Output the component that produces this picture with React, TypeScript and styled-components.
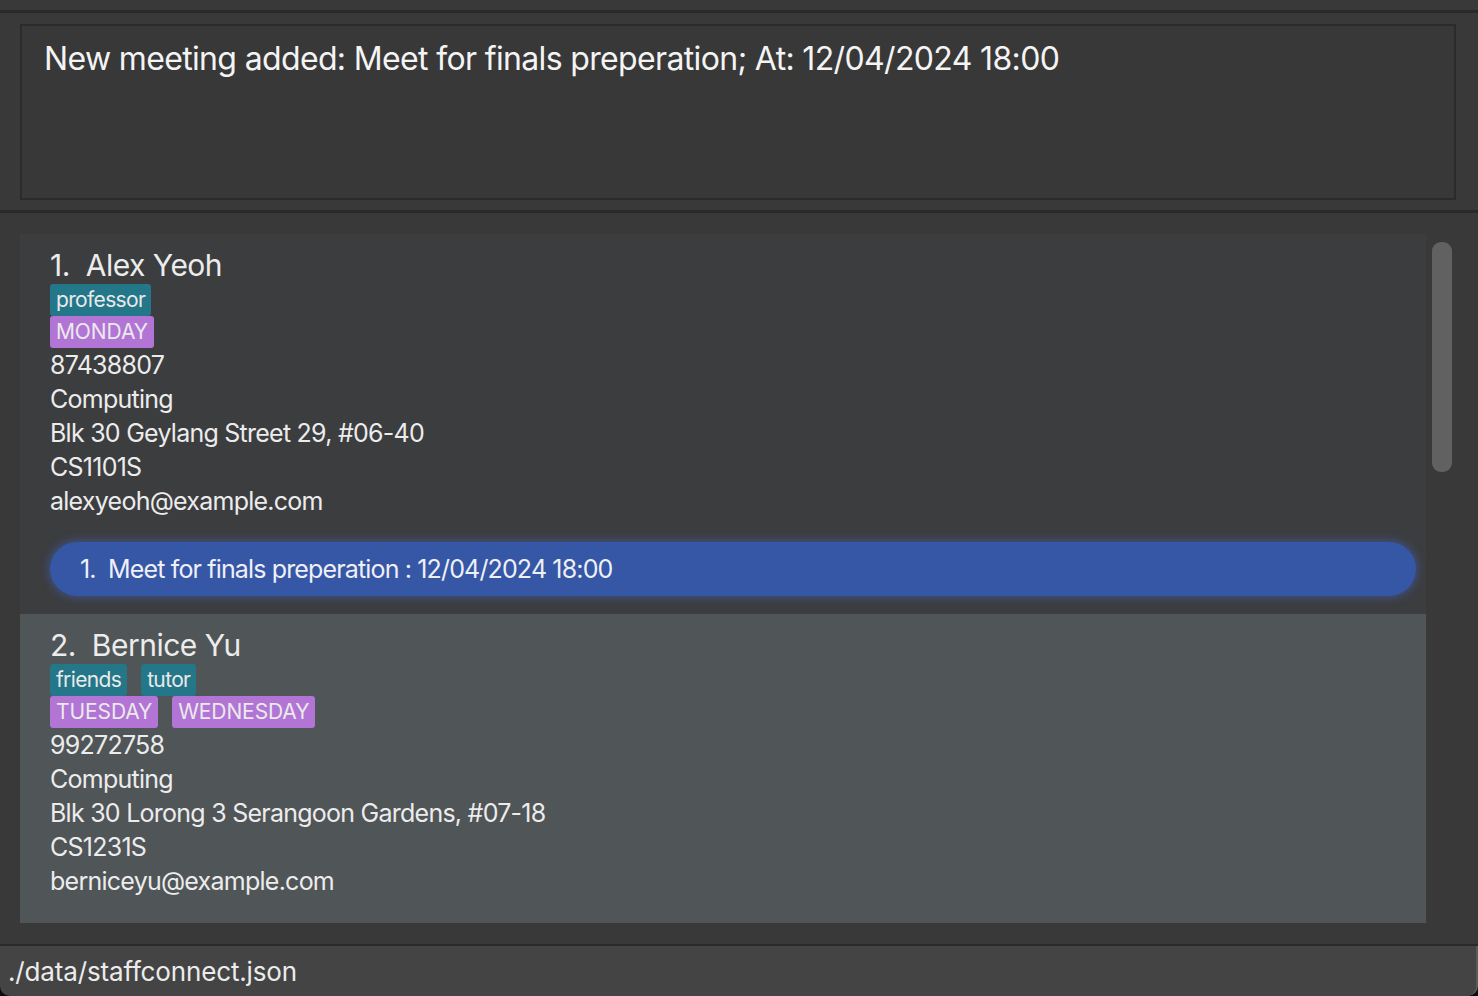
import React from "react";
import styled, { createGlobalStyle } from "styled-components";

const Global = createGlobalStyle`
  html, body { margin: 0; padding: 0; background: #0c0c0c; }
  body { font-family: Inter, "Noto Sans", sans-serif; }
  * { box-sizing: border-box; }
`;

const Window = styled.div`
  width: 1478px;
  height: 996px;
  display: flex;
  flex-direction: column;
  background: #393939;
  border-radius: 0 0 10px 10px;
  overflow: hidden;
`;

const TopStrip = styled.div`
  height: 10px;
  flex: none;
`;

const Divider = styled.div<{ $h: number }>`
  height: ${(p) => p.$h}px;
  flex: none;
  background: #2a2a2a;
`;

const ResultPane = styled.div`
  height: 197px;
  flex: none;
  padding: 11px 22px 10px 20px;
  background: #393939;
`;

const ResultBox = styled.div`
  height: 100%;
  border: 2px solid #2b2b2b;
  background: #383838;
  padding: 13px 22px;
  color: #f4f4f4;
  font-size: 32px;
  letter-spacing: -0.65px;
  line-height: 40px;
`;

const ListPane = styled.div`
  flex: 1;
  display: flex;
  padding: 21px 0 0 20px;
  background: #393939;
  min-height: 0;
`;

const List = styled.div`
  width: 1406px;
  display: flex;
  flex-direction: column;
`;

const ScrollTrack = styled.div`
  width: 52px;
  padding: 8px 0 0 6px;
`;

const ScrollThumb = styled.div`
  width: 20px;
  height: 230px;
  border-radius: 9px;
  background: #616161;
`;

const Card = styled.div<{ $alt: boolean; $hasMeetings: boolean }>`
  background: ${(p) => (p.$alt ? "#505557" : "#3c3d3f")};
  padding: 12px 10px ${(p) => (p.$hasMeetings ? 18 : 25)}px 30px;
  color: #ececec;
`;

const Name = styled.div`
  font-size: 30px;
  line-height: 38px;
  height: 38px;
  letter-spacing: -0.5px;
  white-space: pre;
`;

const TagRow = styled.div`
  display: flex;
  gap: 14px;
`;

const Tag = styled.span<{ $kind: "tag" | "day" }>`
  display: inline-block;
  height: 32px;
  line-height: 32px;
  padding: 0 6px;
  border-radius: 3px;
  font-size: 21px;
  letter-spacing: ${(p) => (p.$kind === "tag" ? "-0.65px" : "-0.1px")};
  color: #eaeaea;
  background: ${(p) => (p.$kind === "tag" ? "#237789" : "#b275d6")};
`;

const InfoLine = styled.div`
  font-size: 25px;
  line-height: 34px;
  height: 34px;
  letter-spacing: -0.75px;
`;

const MeetingList = styled.div`
  margin-top: 24px;
  display: flex;
  flex-direction: column;
`;

const Meeting = styled.div`
  height: 54px;
  border-radius: 27px;
  background: #3656a6;
  box-shadow: 0 0 9px 2px rgba(66, 104, 210, 0.45);
  padding-left: 30px;
  display: flex;
  align-items: center;
  font-size: 25px;
  letter-spacing: -0.85px;
  color: #eef0f6;
  white-space: pre;
`;

const StatusBar = styled.div`
  height: 50px;
  flex: none;
  background: #444444;
  border-radius: 0 0 10px 10px;
  border-right: 2px solid #5a5a5a;
  padding-left: 8px;
  display: flex;
  align-items: center;
  color: #ececec;
  font-size: 26px;
  letter-spacing: -0.15px;
`;

type Person = {
  name: string;
  tags: string[];
  days: string[];
  phone: string;
  faculty: string;
  address: string;
  module: string;
  email: string;
  meetings: string[];
};

const people: Person[] = [
  {
    name: "Alex Yeoh",
    tags: ["professor"],
    days: ["MONDAY"],
    phone: "87438807",
    faculty: "Computing",
    address: "Blk 30 Geylang Street 29, #06-40",
    module: "CS1101S",
    email: "alexyeoh@example.com",
    meetings: ["Meet for finals preperation : 12/04/2024 18:00"],
  },
  {
    name: "Bernice Yu",
    tags: ["friends", "tutor"],
    days: ["TUESDAY", "WEDNESDAY"],
    phone: "99272758",
    faculty: "Computing",
    address: "Blk 30 Lorong 3 Serangoon Gardens, #07-18",
    module: "CS1231S",
    email: "berniceyu@example.com",
    meetings: [],
  },
];

export default function App() {
  return (
    <>
      <Global />
      <Window>
        <TopStrip />
        <Divider $h={3} />
        <ResultPane>
          <ResultBox>
            New meeting added: Meet for finals preperation; At: 12/04/2024 18:00
          </ResultBox>
        </ResultPane>
        <Divider $h={3} />
        <ListPane>
          <List>
            {people.map((p, i) => (
              <Card key={p.name} $alt={i % 2 === 1} $hasMeetings={p.meetings.length > 0}>
                <Name>{`${i + 1}.  ${p.name}`}</Name>
                <TagRow>
                  {p.tags.map((t) => (
                    <Tag key={t} $kind="tag">{t}</Tag>
                  ))}
                </TagRow>
                <TagRow>
                  {p.days.map((d) => (
                    <Tag key={d} $kind="day">{d}</Tag>
                  ))}
                </TagRow>
                <InfoLine>{p.phone}</InfoLine>
                <InfoLine>{p.faculty}</InfoLine>
                <InfoLine>{p.address}</InfoLine>
                <InfoLine>{p.module}</InfoLine>
                <InfoLine>{p.email}</InfoLine>
                {p.meetings.length > 0 && (
                  <MeetingList>
                    {p.meetings.map((m, j) => (
                      <Meeting key={m}>{`${j + 1}.  ${m}`}</Meeting>
                    ))}
                  </MeetingList>
                )}
              </Card>
            ))}
          </List>
          <ScrollTrack>
            <ScrollThumb />
          </ScrollTrack>
        </ListPane>
        <Divider $h={2} />
        <StatusBar>./data/staffconnect.json</StatusBar>
      </Window>
    </>
  );
}
